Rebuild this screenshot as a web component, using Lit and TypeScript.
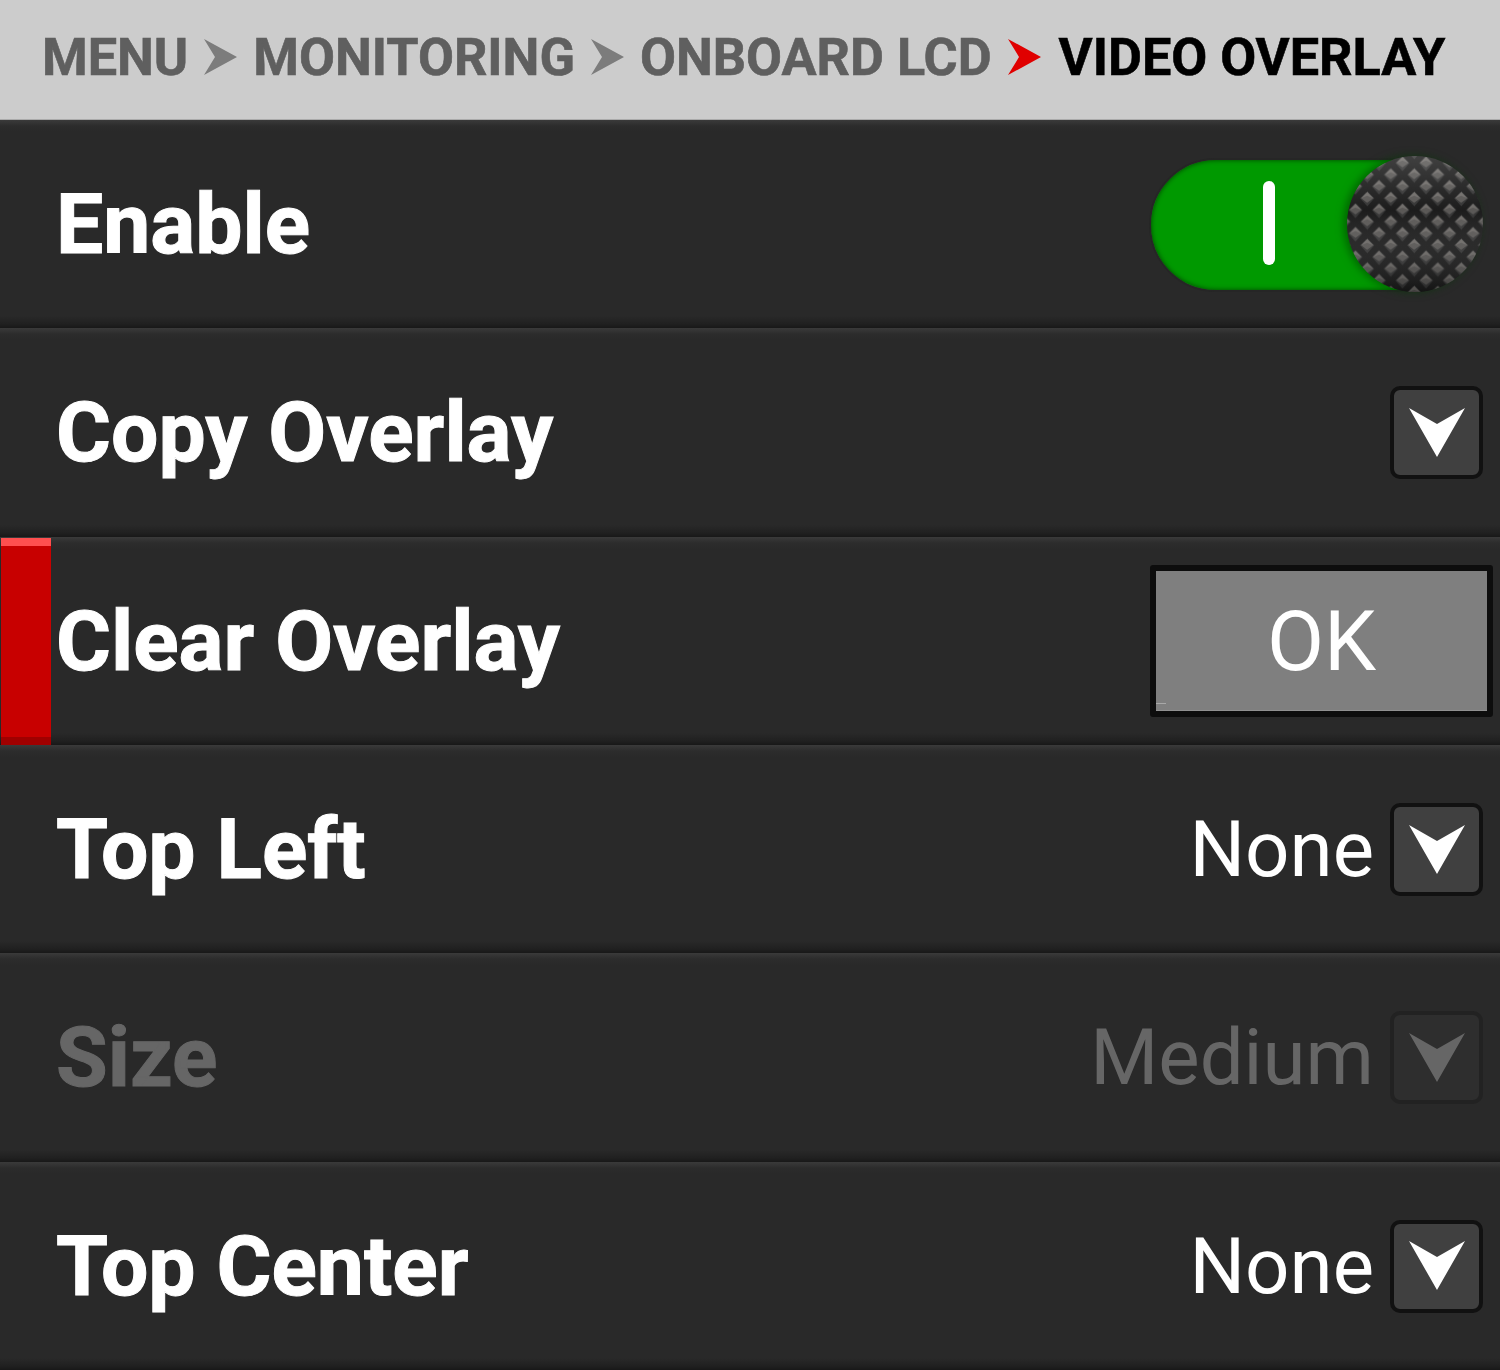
import { LitElement, html, css, svg } from "lit";
import { customElement } from "lit/decorators.js";

const chevron = (cls: string) => html`<svg class="chev ${cls}" viewBox="0 0 33 36"><path d="M0 0 L33 18 L0 36 L11 18 Z"/></svg>`;
const dropdown = (off = false) => html`<div class="dd ${off ? "off" : ""}"><svg viewBox="0 0 56 50"><path d="M0 0 L28 16 L56 0 L28 49 Z"/></svg></div>`;
const stud = (dx: number, dy: number) => svg`<g transform="translate(${dx},${dy})">
  <path d="M12 4 L19 11 L12 19 L5 11 Z" fill="#363636"/>
  <path d="M12 5 L18 11 L12 15.5 L6 11 Z" fill="#5a5856"/>
  <path d="M12 5 L18 11 L12 8.5 L6 11 Z" fill="#6f6c69"/>
</g>`;

@customElement("app-root")
export class AppRoot extends LitElement {
  static styles = css`
    :host { display: grid; grid-template-rows: 120px repeat(6, 1fr); width: 1500px; height: 1370px; background: #292929; font-family: Roboto, "Liberation Sans", sans-serif; overflow: hidden; }
    .crumbs { box-sizing: border-box; background: #ccc; border-bottom: 1px solid #aaa; display: flex; align-items: center; padding: 0 0 5px 42px; font-size: 52.2px; font-weight: 700; -webkit-text-stroke: 0.6px currentColor; color: #5f5f5f; white-space: nowrap; }
    .crumbs .cur { color: #000; padding-left: 2px; }
    .chev { width: 33px; height: 36px; margin: 0 16px; fill: #7c7c7c; flex: none; }
    .chev.red { fill: #e00000; }
    .row { box-sizing: border-box; display: flex; align-items: center; padding: 1px 17px 0 56px; position: relative; background: linear-gradient(#3a3a3a, #2c2c2c 6px, #292929 12px, #292929 calc(100% - 12px), #202020 calc(100% - 4px), #181818); }
    .label { font-size: 84px; font-weight: 700; -webkit-text-stroke: 1px currentColor; color: #fff; flex: 1; }
    .val { font-size: 78px; font-weight: 400; color: #fff; margin-right: 16px; }
    .row.dis .label, .row.dis .val { color: #666; }
    .dd { width: 93px; height: 93px; box-sizing: border-box; border: 4px solid #111; border-radius: 10px; background: #404040; display: flex; align-items: center; justify-content: center; flex: none; }
    .dd svg { width: 56px; height: 50px; fill: #fff; }
    .dd.off { background: #2e2e2e; border-color: #222; }
    .dd.off svg { fill: #666; }
    .mark { position: absolute; left: 1px; top: 1px; bottom: 0; width: 50px; background: #c80000; border-top: 8px solid #ff4f4f; border-bottom: 8px solid #a00000; box-sizing: border-box; }
    .toggle { width: 336px; height: 138px; position: relative; flex: none; }
    .track { position: absolute; left: 2px; top: 2px; right: 2px; height: 134px; box-sizing: border-box; border-radius: 67px; background: #009900; border: 2px solid #262626; box-shadow: inset 0 0 5px #004400; }
    .bar { position: absolute; left: 112px; top: 21px; width: 12px; height: 84px; border-radius: 6px; background: #fff; }
    .knob { position: absolute; right: 0; top: 0; width: 136px; height: 136px; display: block; filter: drop-shadow(-3px 0 4px rgba(0,60,0,.6)); }
    .ok { width: 343px; height: 152px; box-sizing: border-box; border: 6px solid #0d0d0d; border-radius: 3px; background: #7f7f7f; box-shadow: inset 0 -1px 0 #919191; color: #fff; font-size: 83px; font-weight: 400; display: flex; align-items: center; justify-content: center; margin-right: -10px; flex: none; position: relative; }
    .ok::after { content: ""; position: absolute; left: 0; bottom: 7px; width: 10px; height: 1px; background: #a8a8a8; }
  `;

  knob() {
    return html`<svg class="knob" viewBox="0 0 136 136">
      <defs>
        <pattern id="k" width="23.5" height="23.5" patternUnits="userSpaceOnUse" x="-3.5" y="-4">
          ${svg`<rect width="24" height="24" fill="#1c1c1c"/>`}
          ${stud(0, 0)}${stud(-11.75, -11.75)}${stud(11.75, -11.75)}${stud(-11.75, 11.75)}${stud(11.75, 11.75)}
        </pattern>
        <linearGradient id="shade" x1="0" y1="0" x2="0" y2="1">
          <stop offset="0" stop-color="#fff" stop-opacity=".16"/>
          <stop offset=".4" stop-color="#fff" stop-opacity="0"/>
          <stop offset="1" stop-color="#000" stop-opacity=".3"/>
        </linearGradient>
      </defs>
      <circle cx="68" cy="68" r="68" fill="url(#k)"/>
      <circle cx="68" cy="68" r="68" fill="url(#shade)"/>
    </svg>`;
  }

  render() {
    return html`
      <div class="crumbs">
        <span>MENU</span>${chevron("")}<span>MONITORING</span>${chevron("")}<span>ONBOARD LCD</span>${chevron("red")}<span class="cur">VIDEO OVERLAY</span>
      </div>
      <div class="row"><span class="label">Enable</span>
        <div class="toggle"><div class="track"><div class="bar"></div></div>${this.knob()}</div></div>
      <div class="row"><span class="label">Copy Overlay</span>${dropdown()}</div>
      <div class="row"><div class="mark"></div><span class="label">Clear Overlay</span><div class="ok">OK</div></div>
      <div class="row"><span class="label">Top Left</span><span class="val">None</span>${dropdown()}</div>
      <div class="row dis"><span class="label">Size</span><span class="val">Medium</span>${dropdown(true)}</div>
      <div class="row"><span class="label">Top Center</span><span class="val">None</span>${dropdown()}</div>
    `;
  }
}
